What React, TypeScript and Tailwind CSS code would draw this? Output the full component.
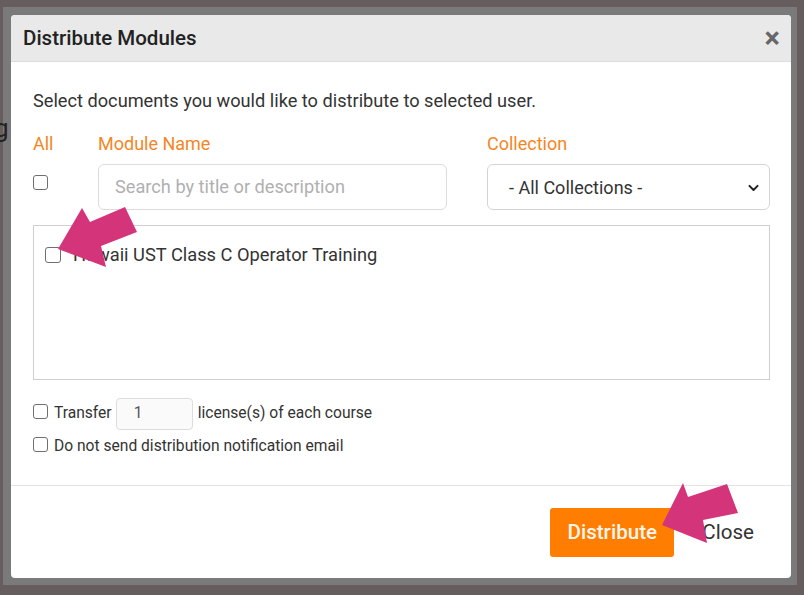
import React from 'react';

function Box({ className = '' }: { className?: string }) {
  return <span className={`inline-block h-[15px] w-[15px] shrink-0 rounded-[3px] border border-[#6f6f6f] bg-white ${className}`} />;
}

function Arrows() {
  return (
    <svg className="pointer-events-none absolute left-0 top-0" width="804" height="595" viewBox="0 0 804 595">
      <polygon
        fill="#d4357a"
        points="58,249 82,208 90,222 125,207 137,232 101,246 106,267"
      />
      <polygon
        fill="#d4357a"
        points="662,525 683,483 688,497 727,484 738,513 703,520 707,543"
      />
    </svg>
  );
}

function App() {
  return (
    <div className="relative h-[595px] w-[804px] overflow-hidden bg-[#665d5e] pb-[10px] pl-[3px] pr-[7px] pt-[7px] font-['Roboto',sans-serif]">
      <div className="relative h-full bg-[#7a7a7a] pb-[7px] pl-[8px] pr-[6px] pt-[8px]">
        <span className="absolute left-[-9px] top-[108px] text-[26px] leading-none text-[#222]">g</span>

        <div className="flex h-[563px] flex-col overflow-hidden rounded-[4px] bg-white">
          {/* header */}
          <div className="flex h-[47px] items-center justify-between border-b border-[#dcdcdc] bg-[#e9e9e9] pl-[12px] pr-[11px]">
            <h1 className="text-[20.5px] font-medium text-[#222]">Distribute Modules</h1>
            <span className="text-[29px] font-bold leading-none text-[#666]">×</span>
          </div>

          {/* body */}
          <div className="flex-1 border-b border-[#e4e4e4] pl-[22px] pr-[21px] pt-[27px]">
            <p className="text-[18.2px] leading-[24px] text-[#333]">Select documents you would like to distribute to selected user.</p>

            <div className="mt-[19px] flex">
              <div className="w-[65px]">
                <div className="text-[18px] leading-[24px] text-[#f5861f]">All</div>
                <div className="mt-[17px]">
                  <Box className="block" />
                </div>
              </div>
              <div className="w-[349px]">
                <div className="text-[18px] leading-[24px] text-[#f5861f]">Module Name</div>
                <div className="mt-[8px] flex h-[46px] items-center rounded-[6px] border border-[#dcdcdc] px-[16px] text-[18.2px] text-[#b0b0b0]">
                  Search by title or description
                </div>
              </div>
              <div className="ml-[40px] flex-1">
                <div className="text-[18px] leading-[24px] text-[#f5861f]">Collection</div>
                <div className="mt-[8px] flex h-[46px] items-center justify-between rounded-[6px] border border-[#d4d4d4] pl-[21px] pr-[9px] text-[18px] text-[#333]">
                  <span>- All Collections -</span>
                  <svg width="13" height="13" viewBox="0 0 16 16">
                    <path d="M3 6l5 5 5-5" fill="none" stroke="#222" strokeWidth="2.4" strokeLinecap="round" strokeLinejoin="round" />
                  </svg>
                </div>
              </div>
            </div>

            <div className="mt-[15px] h-[155px] border border-[#cfcfcf] pl-[11px] pt-[15px]">
              <div className="flex items-center gap-[12px]">
                <Box className="h-[16px] w-[16px]" />
                <span className="text-[18.3px] text-[#333]">Hawaii UST Class C Operator Training</span>
              </div>
            </div>

            <div className="mt-[18px] flex items-center text-[15.6px] text-[#333]">
              <Box className="mr-[6px] -translate-y-[3px]" />
              <span>Transfer</span>
              <div className="ml-[4px] mr-[5px] flex h-[32px] w-[77px] items-center rounded-[4px] border border-[#dcdcdc] bg-[#fafafa] pl-[17px] text-[#555]">1</div>
              <span>license(s) of each course</span>
            </div>
            <div className="mt-[5px] flex items-center text-[15.6px] text-[#333]">
              <Box className="mr-[6px] -translate-y-[2px]" />
              <span>Do not send distribution notification email</span>
            </div>
          </div>

          {/* footer */}
          <div className="flex h-[92px] items-center justify-end pr-[37px]">
            <button className="h-[49px] w-[124px] rounded-[3px] bg-[#ff7d00] text-[20.6px] font-medium text-[#fff7ec]">Distribute</button>
            <span className="ml-[28px] text-[20.6px] text-[#333]">Close</span>
          </div>
        </div>
      </div>
      <Arrows />
    </div>
  );
}

export default App;
